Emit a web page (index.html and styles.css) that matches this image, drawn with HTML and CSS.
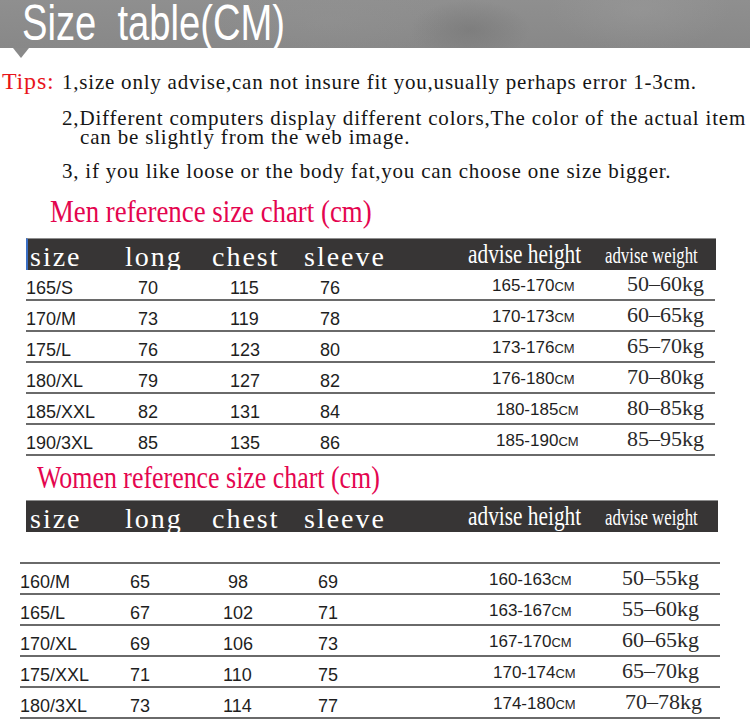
FILE: index.html
```html
<!DOCTYPE html>
<html lang="en">
<head>
<meta charset="utf-8">
<title>Size table</title>
<link rel="stylesheet" href="styles.css">
</head>
<body>
<div class="page">
  <header class="banner"><h1 class="banner-title">Size&nbsp; table(CM)</h1></header>
  <div class="pointer"></div>

  <section class="tips">
    <div class="tips-label">Tips:</div>
    <ul class="tips-list">
      <li class="tip">1,size only advise,can not insure fit you,usually perhaps error 1-3cm.</li>
      <li class="tip tip-2">2,Different computers display different colors,The color of the actual item<br><span class="cont">can be slightly from the web image.</span></li>
      <li class="tip tip-3">3, if you like loose or the body fat,you can choose one size bigger.</li>
    </ul>
  </section>

  <h2 class="chart-title men-title"><span class="cond-title">Men reference size chart (cm)</span></h2>
  <div class="chart men">
    <div class="head men-head">
      <span class="h">size</span><span class="h">long</span><span class="h">chest</span><span class="h">sleeve</span>
      <span class="h2"><span class="cond-h">advise height</span></span>
      <span class="h3"><span class="cond-w">advise weight</span></span>
    </div>
    <div class="row"><span>165/S</span><span>70</span><span>115</span><span>76</span><span class="ht">165-170<small>CM</small></span><span class="wt">50–60kg</span></div>
    <div class="row"><span>170/M</span><span>73</span><span>119</span><span>78</span><span class="ht">170-173<small>CM</small></span><span class="wt">60–65kg</span></div>
    <div class="row"><span>175/L</span><span>76</span><span>123</span><span>80</span><span class="ht">173-176<small>CM</small></span><span class="wt">65–70kg</span></div>
    <div class="row"><span>180/XL</span><span>79</span><span>127</span><span>82</span><span class="ht">176-180<small>CM</small></span><span class="wt">70–80kg</span></div>
    <div class="row"><span>185/XXL</span><span>82</span><span>131</span><span>84</span><span class="ht nudge">180-185<small>CM</small></span><span class="wt">80–85kg</span></div>
    <div class="row"><span>190/3XL</span><span>85</span><span>135</span><span>86</span><span class="ht nudge">185-190<small>CM</small></span><span class="wt">85–95kg</span></div>
  </div>

  <h2 class="chart-title women-title"><span class="cond-title">Women reference size chart (cm)</span></h2>
  <div class="chart women">
    <div class="head women-head">
      <span class="h">size</span><span class="h">long</span><span class="h">chest</span><span class="h">sleeve</span>
      <span class="h2"><span class="cond-h">advise height</span></span>
      <span class="h3"><span class="cond-w">advise weight</span></span>
    </div>
    <div class="row empty"></div>
    <div class="row"><span>160/M</span><span>65</span><span class="two">98</span><span>69</span><span class="ht">160-163<small>CM</small></span><span class="wt">50–55kg</span></div>
    <div class="row"><span>165/L</span><span>67</span><span>102</span><span>71</span><span class="ht">163-167<small>CM</small></span><span class="wt">55–60kg</span></div>
    <div class="row"><span>170/XL</span><span>69</span><span>106</span><span>73</span><span class="ht">167-170<small>CM</small></span><span class="wt">60–65kg</span></div>
    <div class="row"><span>175/XXL</span><span>71</span><span>110</span><span>75</span><span class="ht nudge">170-174<small>CM</small></span><span class="wt">65–70kg</span></div>
    <div class="row"><span>180/3XL</span><span>73</span><span>114</span><span>77</span><span class="ht nudge">174-180<small>CM</small></span><span class="wt nudge">70–78kg</span></div>
  </div>
</div>
</body>
</html>
```

FILE: styles.css
```css
html, body {
  margin: 0;
  padding: 0;
  background: #ffffff;
}

.page {
  width: 750px;
  height: 728px;
  overflow: hidden;
  background: #ffffff;
  font-family: "Liberation Serif", "Times New Roman", serif;
  color: #151515;
}

/* ---------- banner ---------- */
.banner {
  height: 48px;
  background-color: #8b8b8b;
  background-image:
    radial-gradient(ellipse 60px 30px at 470px 30px, rgba(110,110,110,0.45), rgba(110,110,110,0)),
    radial-gradient(ellipse 90px 40px at 640px 10px, rgba(160,160,160,0.35), rgba(160,160,160,0)),
    radial-gradient(ellipse 120px 40px at 330px 20px, rgba(150,150,150,0.3), rgba(150,150,150,0)),
    linear-gradient(180deg, #8f8f8f 0%, #888888 100%);
  padding-left: 22px;
  padding-top: 2px;
  box-sizing: border-box;
}

.banner-title {
  margin: 0;
  display: inline-block;
  font-family: "Liberation Sans", Arial, sans-serif;
  font-weight: normal;
  font-size: 46px;
  line-height: 42px;
  color: #ffffff;
  white-space: nowrap;
  transform: scale(0.83, 1.08);
  transform-origin: left center;
}

.pointer {
  width: 0;
  height: 0;
  margin-left: 13px;
  border-left: 8px solid transparent;
  border-right: 8px solid transparent;
  border-top: 10px solid #8a8a8a;
}

/* ---------- tips ---------- */
.tips {
  display: flex;
  align-items: baseline;
  margin-top: 12px;
}

.tips-label {
  width: 60px;
  padding-left: 2px;
  flex: none;
  color: #e8141b;
  font-size: 24px;
  letter-spacing: 0.8px;
  line-height: 22px;
}

.tips-list {
  list-style: none;
  margin: 0;
  padding: 0;
}

.tip {
  font-size: 21px;
  line-height: 19px;
  letter-spacing: 0.78px;
  white-space: nowrap;
}

.tip:first-child {
  line-height: 22px;
}

.tip-2 {
  margin-top: 16px;
  letter-spacing: 0.82px;
}

.tip-3 {
  margin-top: 15px;
}

.cont {
  padding-left: 18px;
}

/* ---------- chart titles ---------- */
.chart-title {
  margin: 0;
  font-weight: normal;
  font-size: 31px;
  line-height: 32px;
  color: #e4054f;
  white-space: nowrap;
}

.cond-title {
  display: inline-block;
  transform-origin: left center;
}

.men-title {
  margin-top: 15px;
  padding-left: 50px;
}

.men-title .cond-title {
  transform: scaleX(0.865);
}

.women-title {
  margin-top: 6px;
  padding-left: 37px;
}

.women-title .cond-title {
  transform: scaleX(0.835);
}

/* ---------- charts ---------- */
.chart.men {
  margin-top: 10px;
  margin-left: 26px;
  width: 690px;
}

.chart.women {
  margin-top: 6px;
  margin-left: 20px;
  width: 700px;
}

.head {
  height: 32px;
  box-sizing: border-box;
  background: #373535;
  border-top: 1px solid #8e8e8e;
  color: #ffffff;
  display: grid;
  grid-template-columns: 95px 87px 92px 164px 137px minmax(0, 1fr);
  align-items: center;
  padding-left: 4px;
  white-space: nowrap;
  overflow: visible;
}

.men-head {
  border-left: 2px solid #3b6fc4;
  padding-left: 2px;
}

.women-head {
  margin-left: 6px;
  margin-right: 2px;
}

.h {
  font-size: 28px;
  line-height: 31px;
  letter-spacing: 2px;
}

.h2, .h3 {
  line-height: 31px;
}

.cond-h {
  display: inline-block;
  font-size: 27px;
  transform: scaleX(0.79);
  transform-origin: left center;
}

.cond-w {
  display: inline-block;
  font-size: 23px;
  transform: scaleX(0.73);
  transform-origin: left center;
}

.row {
  height: 31px;
  box-sizing: border-box;
  border-bottom: 2px solid #6a6a6a;
  display: grid;
  align-items: start;
  font-family: "Liberation Sans", Arial, sans-serif;
  font-size: 18px;
  line-height: 22px;
  color: #1e1e1e;
  white-space: nowrap;
}

.row > span {
  margin-top: 7px;
}

.men .row {
  grid-template-columns: 112px 92px 90px 172px 135px minmax(0, 1fr);
  width: 689px;
}

.women .row {
  grid-template-columns: 110px 93px 95px 171px 133px minmax(0, 1fr);
}

.women .row.empty {
  height: 32px;
}

.row > .ht {
  font-size: 17px;
  margin-top: 5px;
}

.ht small {
  font-size: 13px;
}

.ht.nudge {
  padding-left: 4px;
}

.row > .wt {
  font-family: "Liberation Serif", "Times New Roman", serif;
  font-size: 22px;
  color: #2a2a2a;
  margin-top: 3px;
}

.wt.nudge {
  padding-left: 3px;
}

.two {
  padding-left: 5px;
}
```
